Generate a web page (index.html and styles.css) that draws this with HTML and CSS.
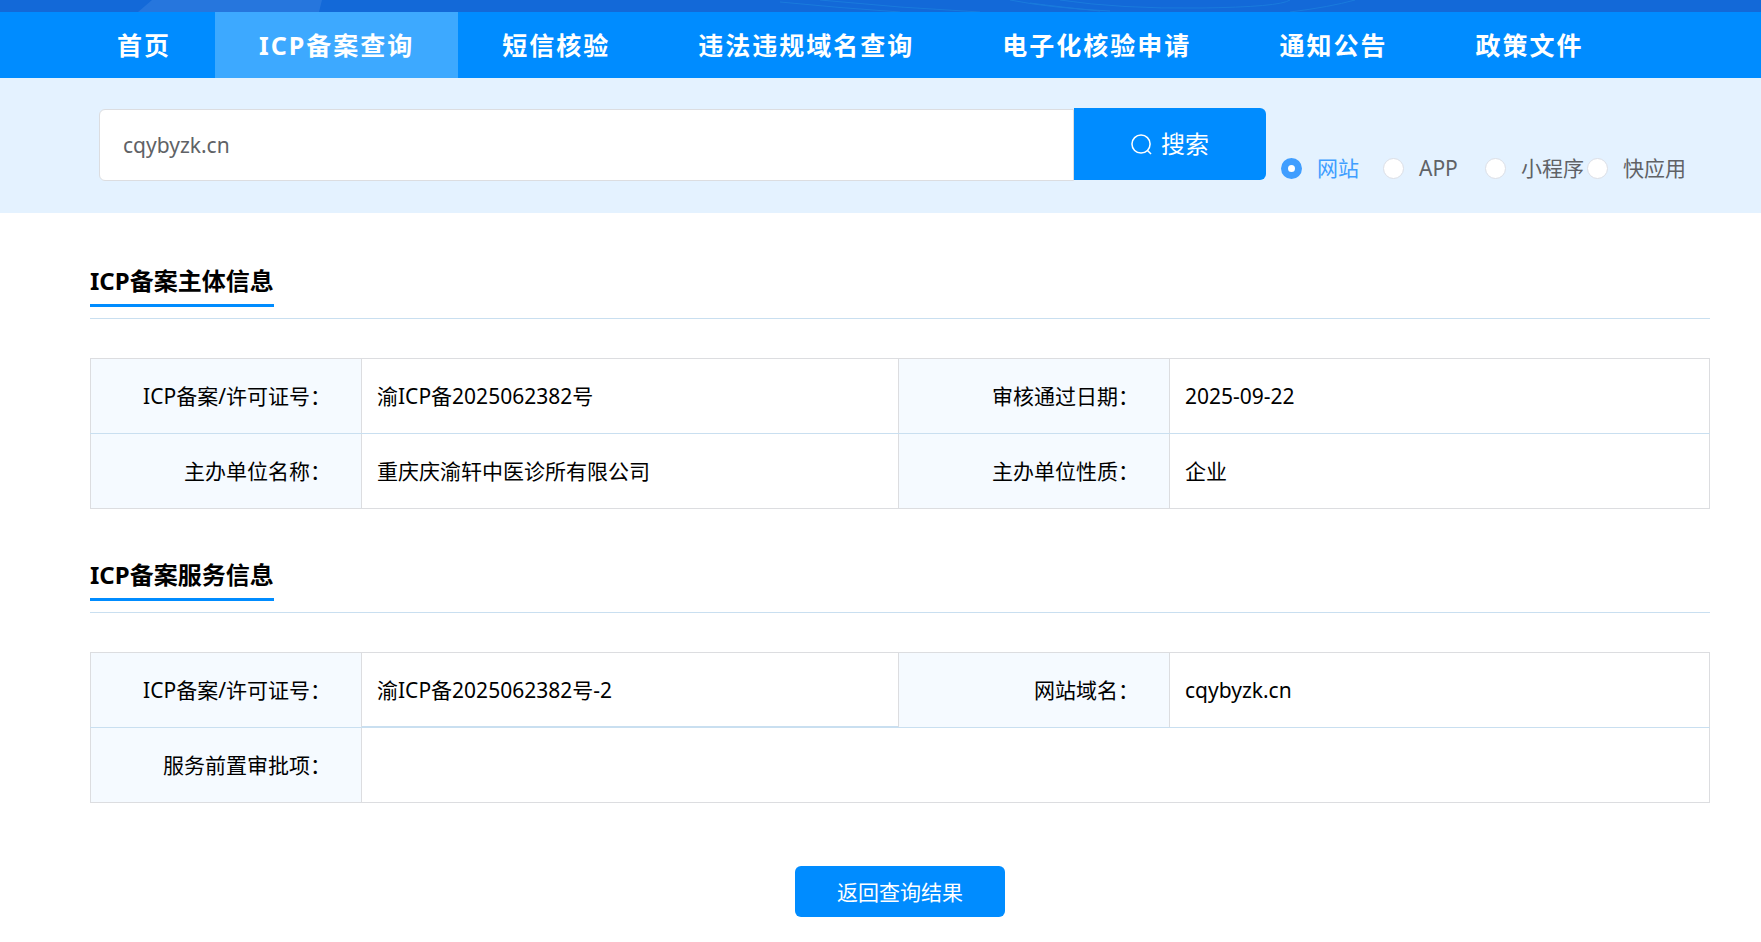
FILE: index.html
```html
<!DOCTYPE html>
<html lang="zh-CN">
<head>
<meta charset="utf-8">
<title>ICP备案查询</title>
<link rel="stylesheet" href="styles.css">
</head>
<body>
<header>
  <div class="banner">
    <svg class="banner-art" viewBox="0 0 1761 12" preserveAspectRatio="none" aria-hidden="true">
      <polygon points="152,0 322,0 319,12 138,12" fill="#2676dd"/>
      <g fill="none" stroke="#2396e4" stroke-width="1" opacity="0.4">
        <path d="M780 2Q840 8 900 12"/>
        <path d="M820 0Q900 8 980 12"/>
        <path d="M1010 0Q1050 8 1110 11"/>
        <path d="M1060 0Q1120 9 1200 8T1290 0"/>
        <path d="M1030 3Q1060 7 1100 11"/>
        <path d="M1290 12Q1330 7 1355 0"/>
      </g>
    </svg>
  </div>
  <nav class="nav">
    <a class="nav-item" href="#">首页</a>
    <a class="nav-item nav-item-active" href="#">ICP备案查询</a>
    <a class="nav-item" href="#">短信核验</a>
    <a class="nav-item" href="#">违法违规域名查询</a>
    <a class="nav-item" href="#">电子化核验申请</a>
    <a class="nav-item" href="#">通知公告</a>
    <a class="nav-item" href="#">政策文件</a>
  </nav>
</header>
<form class="search">
  <input class="search-input" type="text" value="cqybyzk.cn" aria-label="搜索内容">
  <button class="search-button" type="button">
    <svg class="search-icon" viewBox="0 0 22 22" aria-hidden="true"><circle cx="10.5" cy="10.5" r="9.5"/><path d="M17 17L21 21"/></svg>
    搜索
  </button>
  <div class="types">
    <label class="type"><input class="radio" type="radio" name="type" checked><span class="type-text">网站</span></label>
    <label class="type"><input class="radio" type="radio" name="type"><span class="type-text">APP</span></label>
    <label class="type"><input class="radio" type="radio" name="type"><span class="type-text">小程序</span></label>
    <label class="type"><input class="radio" type="radio" name="type"><span class="type-text">快应用</span></label>
  </div>
</form>
<main class="content">
  <section class="section">
    <div class="section-head"><h2 class="section-title">ICP备案主体信息</h2></div>
    <table class="info">
      <colgroup><col class="col-label"><col class="col-value"><col class="col-label"><col></colgroup>
      <tr><th>ICP备案/许可证号：</th><td>渝ICP备2025062382号</td><th>审核通过日期：</th><td>2025-09-22</td></tr>
      <tr><th>主办单位名称：</th><td>重庆庆渝轩中医诊所有限公司</td><th>主办单位性质：</th><td>企业</td></tr>
    </table>
  </section>
  <section class="section">
    <div class="section-head"><h2 class="section-title">ICP备案服务信息</h2></div>
    <table class="info">
      <colgroup><col class="col-label"><col class="col-value"><col class="col-label"><col></colgroup>
      <tr><th>ICP备案/许可证号：</th><td class="cell-marked">渝ICP备2025062382号-2</td><th>网站域名：</th><td>cqybyzk.cn</td></tr>
      <tr><th>服务前置审批项：</th><td colspan="3"></td></tr>
    </table>
  </section>
  <button class="back" type="button">返回查询结果</button>
</main>
</body>
</html>
```

FILE: styles.css
```css
* {
  box-sizing: border-box;
}

body {
  margin: 0;
  background: #fff;
  color: #000;
  font: 21px/30px "Noto Sans", "Noto Sans CJK SC", sans-serif;
}

button,
input {
  font: inherit;
}

.banner {
  height: 12px;
  background: #1369d8;
}

.banner-art {
  display: block;
  width: 100%;
  height: 100%;
}

.nav {
  display: flex;
  padding-left: 73px;
  background: #008cff;
}

.nav-item {
  padding: 0 44px;
  color: #fff;
  font-size: 25px;
  font-weight: 700;
  line-height: 66px;
  letter-spacing: 2px;
  white-space: nowrap;
  text-decoration: none;
}

.nav-item-active {
  background: #3da9ff;
}

.search {
  display: flex;
  align-items: flex-start;
  padding: 30px 69px 30px 99px;
  background: #e4f2ff;
}

.search-input {
  flex: 1;
  min-width: 0;
  height: 72px;
  margin-top: 1px;
  padding: 0 23px;
  border: 1px solid #dcdde0;
  border-radius: 6px 0 0 6px;
  background: #fff;
  color: #606266;
}

.search-button {
  display: flex;
  align-items: center;
  justify-content: center;
  gap: 9px;
  width: 192px;
  height: 72px;
  padding: 0;
  border: 0;
  border-radius: 0 6px 6px 0;
  background: #008cff;
  color: #fff;
  font-size: 24px;
}

.search-icon {
  width: 21px;
  height: 21px;
  fill: none;
  stroke: #fff;
  stroke-width: 1.6;
}

.types {
  display: flex;
  margin-left: 15px;
  padding-top: 45px;
}

.type {
  display: flex;
  align-items: center;
  gap: 15px;
  width: 102px;
  color: #606266;
  white-space: nowrap;
}

.type:last-child {
  width: 105px;
}

.radio {
  flex: none;
  width: 21px;
  height: 21px;
  margin: 0;
  appearance: none;
  border: 1px solid #dcdfe6;
  border-radius: 50%;
  background: #fff;
}

.radio:checked {
  border: 7px solid #409eff;
}

.radio:checked + .type-text {
  color: #409eff;
}

.content {
  padding: 46px 51px 26px 90px;
}

.section {
  margin-bottom: 44px;
}

.section-head {
  display: flex;
  height: 60px;
  border-bottom: 1px solid #c9dff0;
}

.section-title {
  height: 48px;
  margin: 0;
  border-bottom: 3px solid #008cff;
  font-size: 24px;
  font-weight: 700;
  line-height: 44px;
}

.info {
  width: 100%;
  margin-top: 39px;
  border: 1px solid #dcdde0;
  border-collapse: collapse;
  table-layout: fixed;
}

.info th,
.info td {
  height: 75px;
  padding: 0 15px;
  border: 1px solid #dcdde0;
  border-top-color: #c9dff0;
  text-align: left;
  font-weight: 400;
}

.info tr:first-child th,
.info tr:first-child td {
  border-top-color: #dcdde0;
  border-bottom-color: #c9dff0;
}

.info th {
  padding-right: 30px;
  background: #f5faff;
  text-align: right;
}

.info .cell-marked {
  box-shadow: inset 0 -1px #c9dff0;
}

.col-label {
  width: 271px;
}

.col-value {
  width: 537px;
}

.back {
  display: block;
  width: 210px;
  height: 51px;
  margin: 63px auto 0;
  padding: 0;
  border: 0;
  border-radius: 6px;
  background: #008cff;
  color: #fff;
}
```
